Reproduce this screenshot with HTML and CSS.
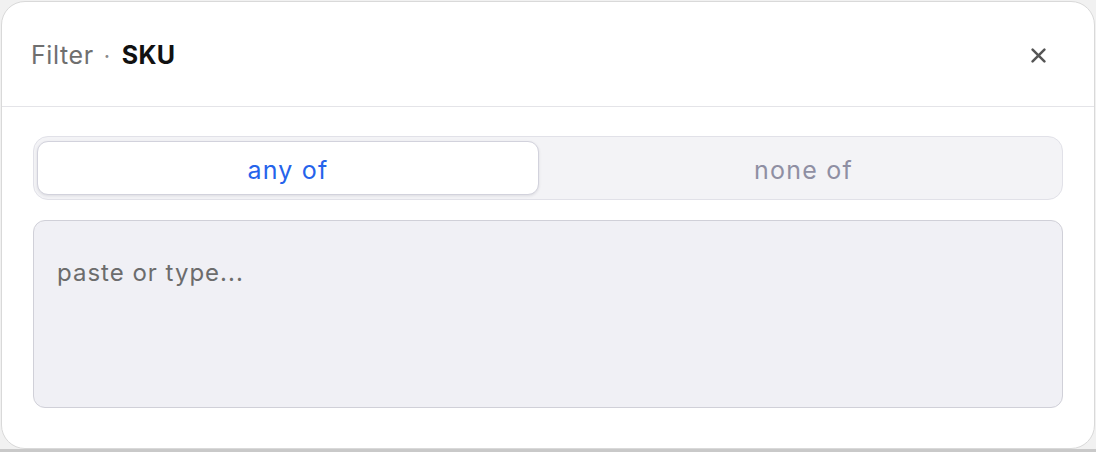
FILE: index.html
```html
<!DOCTYPE html>
<html lang="en">
<head>
<meta charset="utf-8">
<title>Filter · SKU</title>
<link rel="stylesheet" href="styles.css">
</head>
<body>
<div class="card">
  <header class="card-header">
    <h1 class="title"><span class="title-label">Filter</span><span class="title-sep">·</span><span class="title-field">SKU</span></h1>
    <button class="close" aria-label="Close">
      <svg width="15" height="15" viewBox="0 0 15 15" aria-hidden="true"><path d="M1.6 1.6 L13.4 13.4 M13.4 1.6 L1.6 13.4" stroke="#555555" stroke-width="2.5" stroke-linecap="round" fill="none"/></svg>
    </button>
  </header>
  <div class="card-body">
    <div class="segmented">
      <button class="seg seg-active">any of</button>
      <button class="seg">none of</button>
    </div>
    <textarea class="input" placeholder="paste or type..."></textarea>
  </div>
</div>
</body>
</html>
```
FILE: styles.css
```css
* { box-sizing: border-box; }
html, body { margin: 0; padding: 0; }
body {
  width: 1096px;
  height: 452px;
  overflow: hidden;
  background: linear-gradient(to bottom, #f1f1f1 0, #f1f1f1 449px, #c9c9c9 449px);
  font-family: "Inter", "Open Sans", sans-serif;
  padding: 1px 1px 0 1px;
}
.card {
  height: 448px;
  background: #ffffff;
  border: 1px solid #d9d9d9;
  border-radius: 24px;
  display: flex;
  flex-direction: column;
}
.card-header {
  height: 105px;
  border-bottom: 1px solid #e4e4e8;
  display: flex;
  align-items: center;
  justify-content: space-between;
  padding: 3px 48px 0 29px;
}
.title {
  margin: 0;
  font-size: 25px;
  line-height: 1;
  font-weight: 400;
  letter-spacing: 0.6px;
  display: flex;
  align-items: baseline;
}
.title-label { color: #6f6f6f; }
.title-sep { color: #8a8a8a; margin: 0 11px 0 10px; font-size: 22px; }
.title-field { color: #111111; font-weight: 700; letter-spacing: 0.4px; }
.close {
  border: 0;
  background: none;
  padding: 0;
  width: 15px;
  height: 15px;
  display: flex;
  cursor: pointer;
}
.card-body {
  padding: 29px 31px 0 31px;
  display: flex;
  flex-direction: column;
  gap: 20px;
}
.segmented {
  height: 64px;
  background: #f3f3f6;
  border: 1px solid #e1e1e8;
  border-radius: 15px;
  padding: 4px 3px;
  display: grid;
  grid-template-columns: 1fr 1fr;
}
.seg {
  border: 1px solid transparent;
  background: transparent;
  border-radius: 11px;
  font-family: inherit;
  font-size: 25px;
  letter-spacing: 1.2px;
  color: #8f8fa3;
  padding: 3px 0 0 0;
  cursor: pointer;
}
.seg-active {
  margin-right: 9px;
  background: #ffffff;
  border-color: #d2d2dc;
  color: #2563eb;
  box-shadow: 0 1px 3px rgba(20, 20, 40, 0.10);
}
.input {
  display: block;
  width: 100%;
  height: 188px;
  resize: none;
  background: #f0f0f5;
  border: 1px solid #d0d0d8;
  border-radius: 12px;
  padding: 38px 23px;
  font-family: inherit;
  font-size: 24px;
  letter-spacing: 1px;
  line-height: 1.2;
  color: #333;
  outline: none;
}
.input::placeholder { color: #6c6c6c; }
```
